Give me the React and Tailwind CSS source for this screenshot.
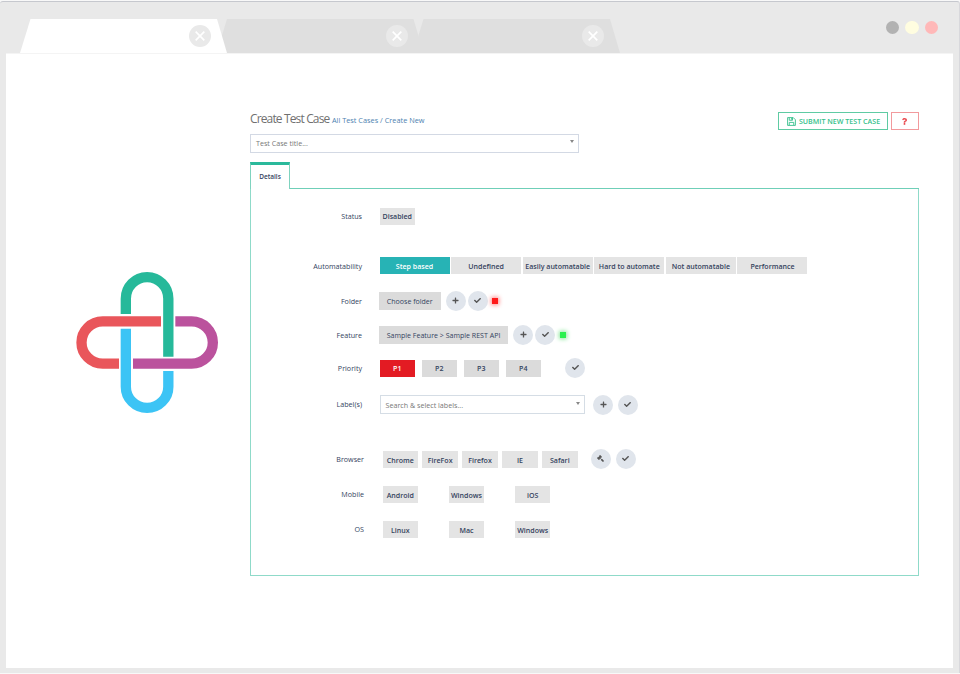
import { FaCheck, FaGavel, FaPlus, FaQuestion } from 'react-icons/fa';
import clsx from 'clsx';

const TABS = [
  { id: 1, style: 'bg-white z-10' },
  { id: 2, style: 'bg-[#dfdfdf] -ml-[10.5px]' },
  { id: 3, style: 'bg-[#dfdfdf] -ml-[10.5px]' },
];

const AUTOMATABILITY = [
  'Step based',
  'Undefined',
  'Easily automatable',
  'Hard to automate',
  'Not automatable',
  'Performance',
];
const PRIORITIES = ['P1', 'P2', 'P3', 'P4'];
const BROWSERS = ['Chrome', 'FireFox', 'Firefox', 'IE', 'Safari'];
const MOBILE = ['Android', 'Windows', 'iOS'];
const SYSTEMS = ['Linux', 'Mac', 'Windows'];

const BrowserTab = ({ style }) => (
  <div
    className={clsx(
      'w-[207px] h-[34px] pt-[6px] pr-[16px] flex justify-end items-start [clip-path:polygon(10.5px_0,197px_0,100%_100%,0_100%)]',
      style
    )}
  >
    <div className="size-[22px] rounded-full bg-[#e9e9e9] flex items-center justify-center">
      <svg width="10" height="10" viewBox="0 0 10 10" stroke="#fff" strokeWidth="1.7">
        <path d="M0.7 0.7L9.3 9.3M9.3 0.7L0.7 9.3" />
      </svg>
    </div>
  </div>
);

const TitleBar = () => (
  <div className="h-[51px] flex justify-between pl-[19px] pr-[15px]">
    <div className="flex items-end">
      {TABS.map((tab) => (
        <BrowserTab key={tab.id} style={tab.style} />
      ))}
    </div>
    <div className="flex gap-[6px] pt-[19px]">
      <span className="size-[13.3px] rounded-full bg-[#b2b2b2]" />
      <span className="size-[13.3px] rounded-full bg-[#fffde0]" />
      <span className="size-[13.3px] rounded-full bg-[#ffb8b8]" />
    </div>
  </div>
);

const Logo = () => (
  <svg width="180" height="165" viewBox="0 0 540 495" fill="none" strokeWidth="31">
    <path stroke="#26b99a" d="M197.5 162V116A63.75 64.5 0 0 1 325 116V290" />
    <path stroke="#e9565b" d="M303 184H128A63.5 63.5 0 0 0 128 311H177" />
    <path stroke="#bb529d" d="M346 184H395A63.5 63.5 0 0 1 395 311H219" />
    <path stroke="#3cc4f5" d="M197.5 206V380A63.75 63.75 0 0 0 325 380V333" />
  </svg>
);

const SaveIcon = () => (
  <svg width="9" height="9" viewBox="0 0 18 18" fill="none" stroke="currentColor" strokeWidth="1.8">
    <path d="M1.2 1.2H12.5L16.8 5.5V16.8H1.2Z" strokeLinejoin="round" />
    <path d="M4.5 1.5V6.5H11V1.5M4.5 16.5V10.8H13.5V16.5" />
    <path d="M9.3 2V5.5" />
  </svg>
);

const Row = ({ label, className, wide, children }) => (
  <div className={clsx('h-[20px] flex items-center', className)}>
    <div
      className={clsx(
        'text-right text-[7.15px] leading-[10px]',
        wide ? 'w-[113px] mr-[18.5px]' : 'w-[111px] mr-[17.5px]'
      )}
    >
      {label}
    </div>
    {children}
  </div>
);

const Chip = ({ children, className }) => (
  <div
    className={clsx(
      'h-[17px] shrink-0 flex items-center justify-center pt-px text-[7.05px] whitespace-nowrap',
      className
    )}
  >
    {children}
  </div>
);

const Circle = ({ icon: Icon, className, flip }) => (
  <div
    className={clsx(
      'size-[20px] shrink-0 rounded-full bg-[#e0e5ec] flex items-center justify-center pb-px text-[#555]',
      className
    )}
  >
    <Icon size={7} className={clsx(flip && '-scale-x-100')} />
  </div>
);

const Caret = () => (
  <span className="mb-[3px] border-x-[2px] border-x-transparent border-t-[3px] border-t-[#888]" />
);

const Details = () => (
  <div className="h-[387px] border border-t-0 border-[#8fdac9] pt-[17px] text-[#34435e]">
    <Row label="Status">
      <Chip className="w-[35.5px] bg-[#e4e4e4] font-semibold">Disabled</Chip>
    </Row>

    <Row label="Automatability" className="mt-[29.5px]">
      <div className="flex gap-[1.6px]">
        {AUTOMATABILITY.map((item, i) => (
          <Chip
            key={item}
            className={clsx(
              'w-[70px] font-semibold',
              i === 0 ? 'bg-[#27b3b5] text-white' : 'bg-[#e4e4e4]'
            )}
          >
            {item}
          </Chip>
        ))}
      </div>
    </Row>

    <Row label="Folder" className="mt-[15.5px]">
      <Chip className="w-[61.5px] h-[18.5px] -ml-[0.5px] bg-[#dbdbdb] font-medium">
        Choose folder
      </Chip>
      <Circle icon={FaPlus} className="ml-[5px]" />
      <Circle icon={FaCheck} className="ml-[2px]" />
      <span className="size-[6px] ml-[4.5px] bg-[#ff1a1a] shadow-[0_0_4px_1px_#ff8a8a]" />
    </Row>

    <Row label="Feature" className="mt-[14px]">
      <Chip className="w-[129px] h-[18.5px] -ml-[0.5px] bg-[#dbdbdb] font-medium">
        Sample Feature &gt; Sample REST API
      </Chip>
      <Circle icon={FaPlus} className="ml-[5px]" />
      <Circle icon={FaCheck} className="ml-[2px]" />
      <span className="size-[6px] ml-[4.5px] bg-[#2bf04e] shadow-[0_0_4px_1px_#8ae69a]" />
    </Row>

    <Row label="Priority" className="mt-[13px]">
      <div className="flex gap-[6.5px]">
        {PRIORITIES.map((item, i) => (
          <Chip
            key={item}
            className={clsx(
              'w-[35.5px] font-semibold',
              i === 0 ? 'bg-[#e31b23] text-white' : 'bg-[#dbdbdb]'
            )}
          >
            {item}
          </Chip>
        ))}
      </div>
      <Circle icon={FaCheck} className="ml-[24px]" />
    </Row>

    <Row label="Label(s)" className="mt-[16px]">
      <div className="w-[205.5px] h-[19px] mt-px border border-[#d5dde5] flex items-center justify-between pl-[5px] pr-[4px] text-[7.15px] text-[#777]">
        <span className="pt-px">Search &amp; select labels...</span>
        <Caret />
      </div>
      <Circle icon={FaPlus} className="ml-[8px] mt-px" />
      <Circle icon={FaCheck} className="ml-[4.5px] mt-px" />
    </Row>

    <Row wide label="Browser" className="mt-[35.4px]">
      <div className="flex gap-[4.4px]">
        {BROWSERS.map((item) => (
          <Chip key={item} className="w-[35.5px] bg-[#e4e4e4] font-semibold">
            {item}
          </Chip>
        ))}
      </div>
      <Circle icon={FaGavel} flip className="ml-[13px]" />
      <Circle icon={FaCheck} className="ml-[5px]" />
    </Row>

    <Row wide label="Mobile" className="mt-[15px]">
      <div className="flex gap-[30.7px]">
        {MOBILE.map((item) => (
          <Chip key={item} className="w-[35.5px] bg-[#e4e4e4] font-semibold">
            {item}
          </Chip>
        ))}
      </div>
    </Row>

    <Row wide label="OS" className="mt-[15px]">
      <div className="flex gap-[30.7px]">
        {SYSTEMS.map((item) => (
          <Chip key={item} className="w-[35.5px] bg-[#e4e4e4] font-semibold">
            {item}
          </Chip>
        ))}
      </div>
    </Row>
  </div>
);

const App = () => (
  <div className="w-[960px] h-[674px] pt-px bg-[#f8f8f8] overflow-hidden font-['Open_Sans',sans-serif]">
    <div className="h-[672px] border-t border-r border-t-[#c6c8ce] border-r-[#d8d8dc] rounded-t-[3px] bg-[#e9e9e9] pl-[6px] pr-[6px]">
      <div className="-ml-[5px]">
        <TitleBar />
      </div>
      <div className="h-[615px] bg-white border-t border-[#f4f4f4] flex">
        <div className="w-[244px] pt-[206px] pl-[54px]">
          <Logo />
        </div>

        <div className="w-[668.5px] pt-[58px]">
          <div className="flex justify-between h-[22px]">
            <div className="flex items-baseline leading-[16px] -mt-px">
              <h1 className="text-[12px] tracking-[-0.86px] text-[#707070] whitespace-nowrap">
                Create Test Case
              </h1>
              <span className="ml-[2.5px] text-[7.35px] text-[#4d7fb0]">
                All Test Cases / Create New
              </span>
            </div>
            <div className="flex gap-[2.5px]">
              <button className="w-[110px] h-[18px] border border-[#5fcba3] text-[#35bf8b] flex items-center justify-center gap-[3px] pl-px text-[7.1px] font-semibold whitespace-nowrap">
                <SaveIcon />
                SUBMIT NEW TEST CASE
              </button>
              <button className="w-[28px] h-[18px] border border-[#f29a9d] text-[#ea4d52] flex items-center justify-center pt-px">
                <FaQuestion size={7} />
              </button>
            </div>
          </div>

          <div className="w-[328.5px] h-[19px] -mt-[0.5px] border border-[#d3d9e4] flex items-center justify-between pl-[5px] pr-[4px] text-[7.15px] text-[#777]">
            <span>Test Case title...</span>
            <Caret />
          </div>

          <div className="mt-[9.5px] flex">
            <div className="w-[40px] h-[27px] border-x border-t-[3px] border-[#7fd3bf] border-t-[#2ab99b] flex items-center justify-center text-[6.5px] font-semibold text-[#34435e]">
              Details
            </div>
            <div className="flex-1 border-b border-[#6fcfb8]" />
          </div>
          <Details />
        </div>
      </div>
    </div>
  </div>
);

export default App;
